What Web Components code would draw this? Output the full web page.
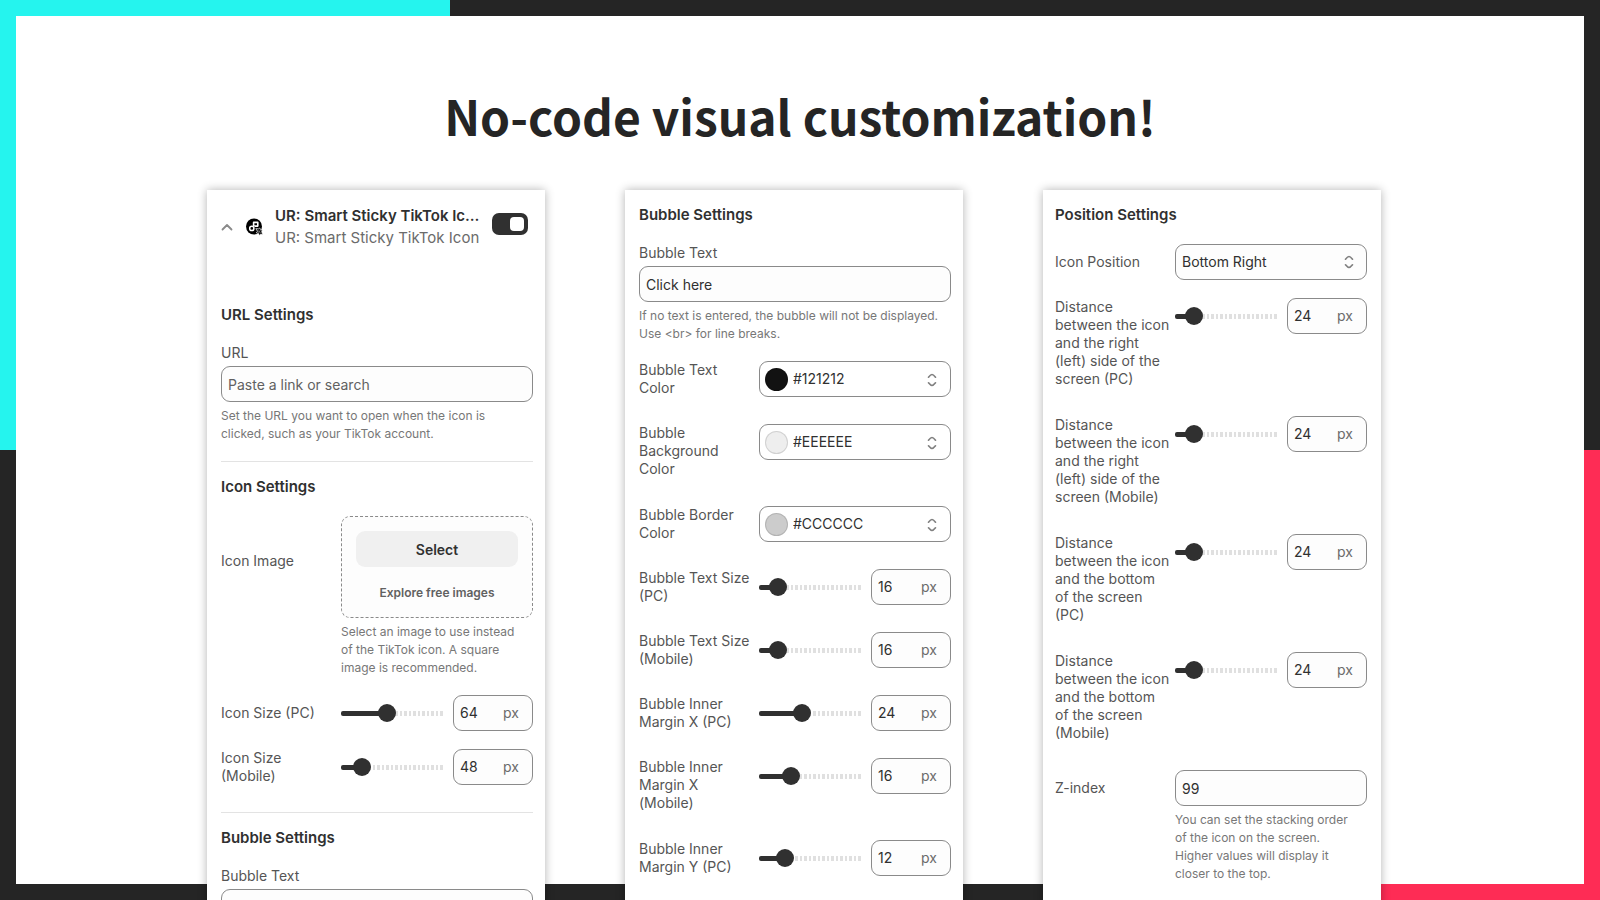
<!DOCTYPE html>
<html lang="en">
<head>
<meta charset="utf-8">
<meta name="viewport" content="width=device-width, initial-scale=1">
<title>No-code visual customization!</title>
<style>
  body { margin: 0; background: #fff; }
</style>
</head>
<body>
<promo-slide>
  <span slot="title">No-code visual customization!</span>

  <settings-panel>
    <app-block-header name="UR: Smart Sticky TikTok Ic…" app="UR: Smart Sticky TikTok Icon"></app-block-header>
    <settings-group heading="URL Settings">
      <text-field label="URL" placeholder="Paste a link or search">Set the URL you want to open when the icon is clicked, such as your TikTok account.</text-field>
    </settings-group>
    <settings-group heading="Icon Settings" divided>
      <image-field label="Icon Image">Select an image to use instead of the TikTok icon. A square image is recommended.</image-field>
      <range-field label="Icon Size (PC)" lines="1" min="40" max="96" value="64"></range-field>
      <range-field label="Icon Size (Mobile)" min="40" max="96" value="48"></range-field>
    </settings-group>
    <settings-group heading="Bubble Settings" divided>
      <text-field label="Bubble Text"></text-field>
    </settings-group>
  </settings-panel>

  <settings-panel>
    <settings-group heading="Bubble Settings">
      <text-field label="Bubble Text" value="Click here">If no text is entered, the bubble will not be displayed. Use &lt;br&gt; for line breaks.</text-field>
      <color-field label="Bubble Text Color" value="#121212"></color-field>
      <color-field label="Bubble Background Color" lines="3" value="#EEEEEE"></color-field>
      <color-field label="Bubble Border Color" value="#CCCCCC"></color-field>
      <range-field label="Bubble Text Size (PC)" min="10" max="60" value="16"></range-field>
      <range-field label="Bubble Text Size (Mobile)" min="10" max="60" value="16"></range-field>
      <range-field label="Bubble Inner Margin X (PC)" min="0" max="60" value="24"></range-field>
      <range-field label="Bubble Inner Margin X (Mobile)" lines="3" min="0" max="60" value="16"></range-field>
      <range-field label="Bubble Inner Margin Y (PC)" min="0" max="60" value="12"></range-field>
    </settings-group>
  </settings-panel>

  <settings-panel variant="last">
    <settings-group heading="Position Settings">
      <select-field label="Icon Position" lines="1" value="Bottom Right"></select-field>
      <range-field label="Distance between the icon and the right (left) side of the screen (PC)" lines="5" min="0" max="200" value="24"></range-field>
      <range-field label="Distance between the icon and the right (left) side of the screen (Mobile)" lines="5" min="0" max="200" value="24"></range-field>
      <range-field label="Distance between the icon and the bottom of the screen (PC)" lines="5" min="0" max="200" value="24"></range-field>
      <range-field label="Distance between the icon and the bottom of the screen (Mobile)" lines="5" min="0" max="200" value="24"></range-field>
      <number-field label="Z-index" lines="1" value="99">You can set the stacking order of the icon on the screen. Higher values will display it closer to the top.</number-field>
    </settings-group>
    <settings-group divided></settings-group>
  </settings-panel>
</promo-slide>

<script>
/* Styles shared by every labelled field. */
const fieldCss = `
  :host { display: block; margin-bottom: 18px; }
  * { box-sizing: border-box; }
  .row { display: grid; grid-template-columns: 116px minmax(0, 1fr); column-gap: 4px; align-items: start; }
  label { color: #555; font-size: 14px; line-height: 18px; }
  .row > label { padding-bottom: 9px; }
  .row > label.single { padding-top: 9px; }
  .row > label.tall { padding-bottom: 10px; }
  input, select, button { font: inherit; color: #303030; margin: 0; }
  .box { display: flex; align-items: center; width: 100%; height: 36px; padding: 0 6px;
         border: 1px solid #8a8a8a; border-radius: 9px; background: #fdfdfd;
         font-size: 14px; line-height: 18px; }
  .help { margin: 5px 0 0; padding-right: 8px; color: #777; font-size: 12px; line-height: 18px; }
  .chevrons { position: absolute; right: 12px; top: 10px; width: 12px; height: 16px; pointer-events: none; }
`;
const chevrons = `<svg class="chevrons" viewBox="0 0 12 16" fill="none" stroke="#808080" stroke-width="1.7" stroke-linecap="round" stroke-linejoin="round" aria-hidden="true"><path d="M2.500 5.200C3.500 4 4.800 2.500 6 2.500S8.500 4 9.500 5.200M2.500 10.800C3.500 12 4.800 13.500 6 13.500S8.500 12 9.500 10.800"/></svg>`;

class SettingsElement extends HTMLElement {
  connectedCallback() {
    if (this.shadowRoot) return;
    const template = document.createElement('template');
    template.innerHTML = `<style>${this.css()}</style>${this.html()}`;
    this.attachShadow({ mode: 'open' }).append(template.content.cloneNode(true));
    this.ready();
  }
  get(name) { return this.getAttribute(name) ?? ''; }
  css() { return ''; }
  html() { return '<slot></slot>'; }
  ready() {}
}

class FieldElement extends SettingsElement {
  css() { return fieldCss; }
  labelHtml() {
    const lines = Number(this.getAttribute('lines') || 2);
    const kind = lines === 1 ? 'single' : lines > 2 ? 'tall' : '';
    return `<label for="control" class="${kind}">${this.get('label')}</label>`;
  }
  helpHtml() { return this.textContent.trim() ? '<p class="help"><slot></slot></p>' : ''; }
}

customElements.define('promo-slide', class extends SettingsElement {
  css() { return `
    :host { display: flex; flex-direction: column; box-sizing: border-box; height: 100vh; overflow: hidden;
      padding: 79px 28px 0 16px; font-family: Inter, sans-serif; color: #303030;
      background:
        linear-gradient(#fff, #fff) center / calc(100% - 32px) calc(100% - 32px) no-repeat,
        linear-gradient(#25f4ee, #25f4ee) left top / 28.125% 50% no-repeat,
        linear-gradient(#fe2c55, #fe2c55) right bottom / 28.125% 50% no-repeat,
        #252525; }
    h1 { margin: 0 -12px 39px 0; text-align: center; color: #252525;
      font: 700 48px/72px "Noto Sans CJK JP", "Noto Sans", sans-serif; }
    .columns { flex: 1; display: grid; grid-template-columns: repeat(3, minmax(0, 338px)); column-gap: 5vw; justify-content: center; }
  `; }
  html() { return '<h1><slot name="title"></slot></h1><div class="columns"><slot></slot></div>'; }
});

customElements.define('settings-panel', class extends SettingsElement {
  css() { return `
    :host { display: block; padding: 15px 12px 0 14px; background: #fff; box-shadow: 0 0 9px rgba(0, 0, 0, .3); }
    :host([variant="last"]) { padding: 15px 14px 0 12px; }
  `; }
});

customElements.define('settings-group', class extends SettingsElement {
  css() { return `
    :host { display: block; }
    :host([divided]) { border-top: 1px solid #e3e3e3; padding-top: 15px; }
    h2 { margin: 0 0 19px; font-size: 15px; line-height: 20px; font-weight: 600; color: #303030; }
  `; }
  html() { return `${this.get('heading') ? `<h2>${this.get('heading')}</h2>` : ''}<slot></slot>`; }
});

customElements.define('app-block-header', class extends SettingsElement {
  css() { return `
    :host { display: flex; align-items: center; margin-bottom: 56px; padding-right: 5px; }
    button { flex: none; width: 12px; height: 12px; padding: 0; border: 0; background: none; line-height: 0; }
    .logo { flex: none; width: 18px; height: 18px; margin: 0 12px; }
    .names { flex: 1; min-width: 0; margin: 0; font-size: 15px; line-height: 22px; white-space: nowrap; color: #6b6b6b; }
    .names strong { display: block; font-weight: 600; color: #303030; }
    input { flex: none; align-self: flex-start; appearance: none; display: flex; box-sizing: border-box;
      width: 36px; height: 22px; margin: 8px 0 0; padding: 4px; border-radius: 7px; background: #8a8a8a; }
    input:checked { background: #303030; justify-content: flex-end; }
    input::before { content: ""; width: 14px; height: 14px; border-radius: 4px; background: #fff; }
  `; }
  html() { return `
    <button type="button" aria-label="Collapse"><svg width="12" height="12" viewBox="0 0 12 12" fill="none" stroke="#8a8a8a" stroke-width="1.8" stroke-linecap="round" stroke-linejoin="round"><path d="M1.5 8.500 6 4l4.500 4.500"/></svg></button>
    <svg class="logo" viewBox="0 0 18 18" aria-hidden="true">
      <circle cx="9" cy="8.500" r="8" fill="#000"/>
      <path d="M8.600 8V4.400h4.200v3.700H9.400" fill="none" stroke="#fff" stroke-width="1.600" stroke-linejoin="round"/>
      <circle cx="6.800" cy="10.400" r="2.100" fill="#000" stroke="#fff" stroke-width="1.500"/>
      <path d="M10.800 10.600l2.700.2 1.300-.8.900 1.700 1.700.4-.7 1.700 1.200 2.700-2.300-.2-1.100 1.300-1-2-2.200-.8 1.200-1.500z" fill="#111" stroke="#fff" stroke-width=".7"/>
      <path d="M12.800 12.300l3 3M15.300 12.300l-2 2.400" stroke="#aaa" stroke-width=".6"/>
    </svg>
    <p class="names"><strong>${this.get('name')}</strong>${this.get('app')}</p>
    <input type="checkbox" role="switch" aria-label="Show block" checked>`; }
});

customElements.define('text-field', class extends FieldElement {
  css() { return fieldCss + `
    label { display: block; margin-bottom: 4px; }
    input::placeholder { color: #616161; opacity: 1; }
  `; }
  html() { return `${this.labelHtml()}<input id="control" class="box" type="text" value="${this.get('value')}" placeholder="${this.get('placeholder')}">${this.helpHtml()}`; }
});

customElements.define('number-field', class extends FieldElement {
  html() { return `<div class="row">${this.labelHtml()}<div><input id="control" class="box" type="text" inputmode="numeric" value="${this.get('value')}">${this.helpHtml()}</div></div>`; }
});

customElements.define('select-field', class extends FieldElement {
  css() { return fieldCss + `
    .wrap { position: relative; }
    select { appearance: none; }
  `; }
  html() { return `<div class="row">${this.labelHtml()}<div class="wrap"><select id="control" class="box"><option>${this.get('value')}</option></select>${chevrons}</div></div>`; }
});

customElements.define('color-field', class extends FieldElement {
  css() { return fieldCss + `
    .box { position: relative; padding: 0 0 0 5px; background: #fff; }
    .swatch { flex: none; width: 23px; height: 23px; border-radius: 50%; border: 1px solid rgba(0, 0, 0, .12); }
    select { appearance: none; flex: 1; min-width: 0; height: 34px; border: 0; padding: 0 5px; background: none; }
  `; }
  html() { return `<div class="row">${this.labelHtml()}<div class="box"><span class="swatch" style="background:${this.get('value')}"></span><select id="control"><option>${this.get('value')}</option></select>${chevrons}</div></div>`; }
});

customElements.define('image-field', class extends FieldElement {
  css() { return fieldCss + `
    .row > label { padding-top: 36px; }
    .drop { display: flex; flex-direction: column; align-items: stretch; gap: 17px; padding: 14px 14px 15px;
      border: 1px dashed #8a8a8a; border-radius: 9px; background: #fdfdfd; }
    button { height: 36px; border: 0; border-radius: 9px; background: #f0f0f0; font-size: 14px; font-weight: 600; }
    a { text-align: center; color: #616161; font-size: 12px; line-height: 18px; font-weight: 600; text-decoration: none; }
  `; }
  html() { return `<div class="row">${this.labelHtml()}<div><div class="drop"><button id="control" type="button">Select</button><a href="#">Explore free images</a></div>${this.helpHtml()}</div></div>`; }
});

customElements.define('range-field', class extends FieldElement {
  css() { return fieldCss + `
    .controls { display: grid; grid-template-columns: minmax(0, 1fr) 80px; column-gap: 8px; align-items: center; }
    input[type="range"] { --at: calc(9px + (100% - 18px) * var(--share)); appearance: none; width: 100%; height: 18px; background: none; }
    input[type="range"]::-webkit-slider-runnable-track { height: 5px; border-radius: 2px; background:
        linear-gradient(90deg, #303030 var(--at), transparent var(--at)),
        repeating-linear-gradient(90deg, #e0e0e0 0 3px, transparent 3px 5px, #e0e0e0 5px 7px, transparent 7px 9px); }
    input[type="range"]::-webkit-slider-thumb { appearance: none; width: 18px; height: 18px; margin-top: -7px; border-radius: 50%; background: #303030; border: 0; }
    .box { padding: 0 13px 0 6px; }
    .box input { flex: 1; min-width: 0; width: 0; padding: 0; border: 0; background: none; outline: 0; }
    .unit { color: #6b6b6b; }
  `; }
  html() { return `<div class="row">${this.labelHtml()}<div class="controls">
      <input id="control" type="range" min="${this.get('min')}" max="${this.get('max')}" value="${this.get('value')}">
      <span class="box"><input type="text" inputmode="numeric" aria-label="${this.get('label')} in pixels" value="${this.get('value')}"><span class="unit">px</span></span>
    </div></div>`; }
  ready() {
    const range = this.shadowRoot.querySelector('[type="range"]');
    const number = this.shadowRoot.querySelector('[type="text"]');
    const paint = () => range.style.setProperty('--share', (range.value - range.min) / (range.max - range.min));
    range.addEventListener('input', () => { number.value = range.value; paint(); });
    number.addEventListener('change', () => { range.value = number.value; paint(); });
    paint();
  }
});
</script>
</body>
</html>
